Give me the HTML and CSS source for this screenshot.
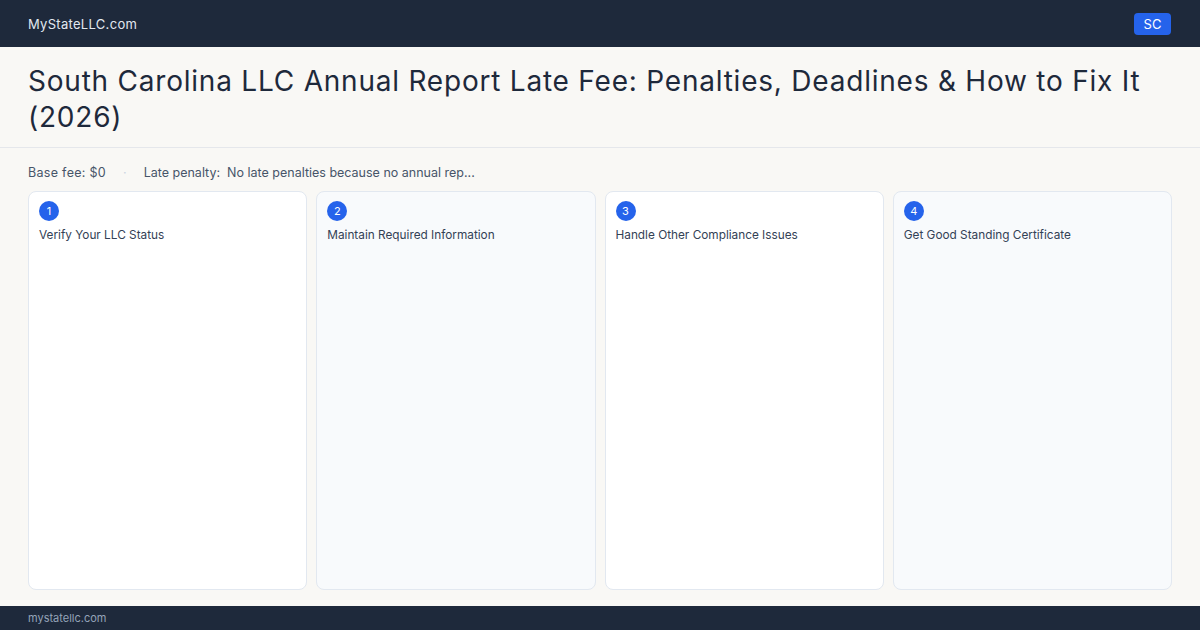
FILE: index.html
```html
<!DOCTYPE html>
<html lang="en">
<head>
  <meta charset="UTF-8" />
  <meta name="viewport" content="width=device-width, initial-scale=1.0" />
  <link rel="stylesheet" href="styles.css">
</head>
<body>
  <header class="topbar">
    <span class="brand">MyStateLLC.com</span>
    <span class="state-tag">SC</span>
  </header>

  <section class="hero">
    <h1>South Carolina LLC Annual Report Late Fee: Penalties, Deadlines &amp; How to Fix It (2026)</h1>
  </section>

  <main class="content">
    <div class="meta">
      <span>Base fee: $0</span>
      <span class="dot">·</span>
      <span>Late penalty:&nbsp; No late penalties because no annual rep...</span>
    </div>

    <div class="steps">
      <div class="step">
        <span class="num">1</span>
        <p>Verify Your LLC Status</p>
      </div>
      <div class="step alt">
        <span class="num">2</span>
        <p>Maintain Required Information</p>
      </div>
      <div class="step">
        <span class="num">3</span>
        <p>Handle Other Compliance Issues</p>
      </div>
      <div class="step alt">
        <span class="num">4</span>
        <p>Get Good Standing Certificate</p>
      </div>
    </div>
  </main>

  <footer class="bottombar">mystatellc.com</footer>
</body>
</html>
```

FILE: styles.css
```css
* {
  box-sizing: border-box;
}

html, body {
  height: 100%;
}

body {
  margin: 0;
  font-family: Inter, "Noto Sans", sans-serif;
  background: #f9f8f5;
  color: #1e293b;
  display: flex;
  flex-direction: column;
}

.topbar {
  height: 47px;
  background: #1e293b;
  display: flex;
  align-items: center;
  justify-content: space-between;
  padding: 0 29px 0 28px;
  flex-shrink: 0;
}

.brand {
  color: #e2e8f0;
  font-size: 13px;
  letter-spacing: 0.3px;
}

.state-tag {
  background: #2563eb;
  color: white;
  font-size: 13px;
  border-radius: 4px;
  width: 37px;
  height: 22px;
  display: flex;
  align-items: center;
  justify-content: center;
}

.hero {
  padding: 16px 28px 12px;
  border-bottom: 1px solid #e5e7eb;
  flex-shrink: 0;
}

.hero h1 {
  margin: 0;
  font-size: 28px;
  line-height: 36px;
  font-weight: 400;
  color: #1e293b;
  letter-spacing: 0.78px;
}

.content {
  flex: 1;
  display: flex;
  flex-direction: column;
  padding: 16px 28px 16px;
  min-height: 0;
}

.meta {
  font-size: 12.5px;
  line-height: 18px;
  color: #475569;
  display: flex;
  gap: 17px;
  margin-bottom: 9px;
}

.meta span:first-child {
  letter-spacing: 0.3px;
}

.meta .dot {
  color: #cbd5e1;
}

.steps {
  flex: 1;
  display: grid;
  grid-template-columns: repeat(4, 1fr);
  gap: 9px;
}

.step {
  background: #ffffff;
  border: 1px solid #e2e8f0;
  border-radius: 8px;
  padding: 9px 10px;
}

.step.alt {
  background: #f8fafc;
}

.num {
  display: flex;
  align-items: center;
  justify-content: center;
  width: 20px;
  height: 20px;
  border-radius: 50%;
  background: #2563eb;
  color: white;
  font-size: 11px;
}

.step p {
  margin: 6px 0 0;
  font-size: 11.8px;
  line-height: 16px;
  color: #334155;
}

.bottombar {
  height: 24px;
  background: #1e293b;
  color: #94a3b8;
  font-size: 11px;
  padding: 0 28px;
  display: flex;
  align-items: center;
  flex-shrink: 0;
}
```
